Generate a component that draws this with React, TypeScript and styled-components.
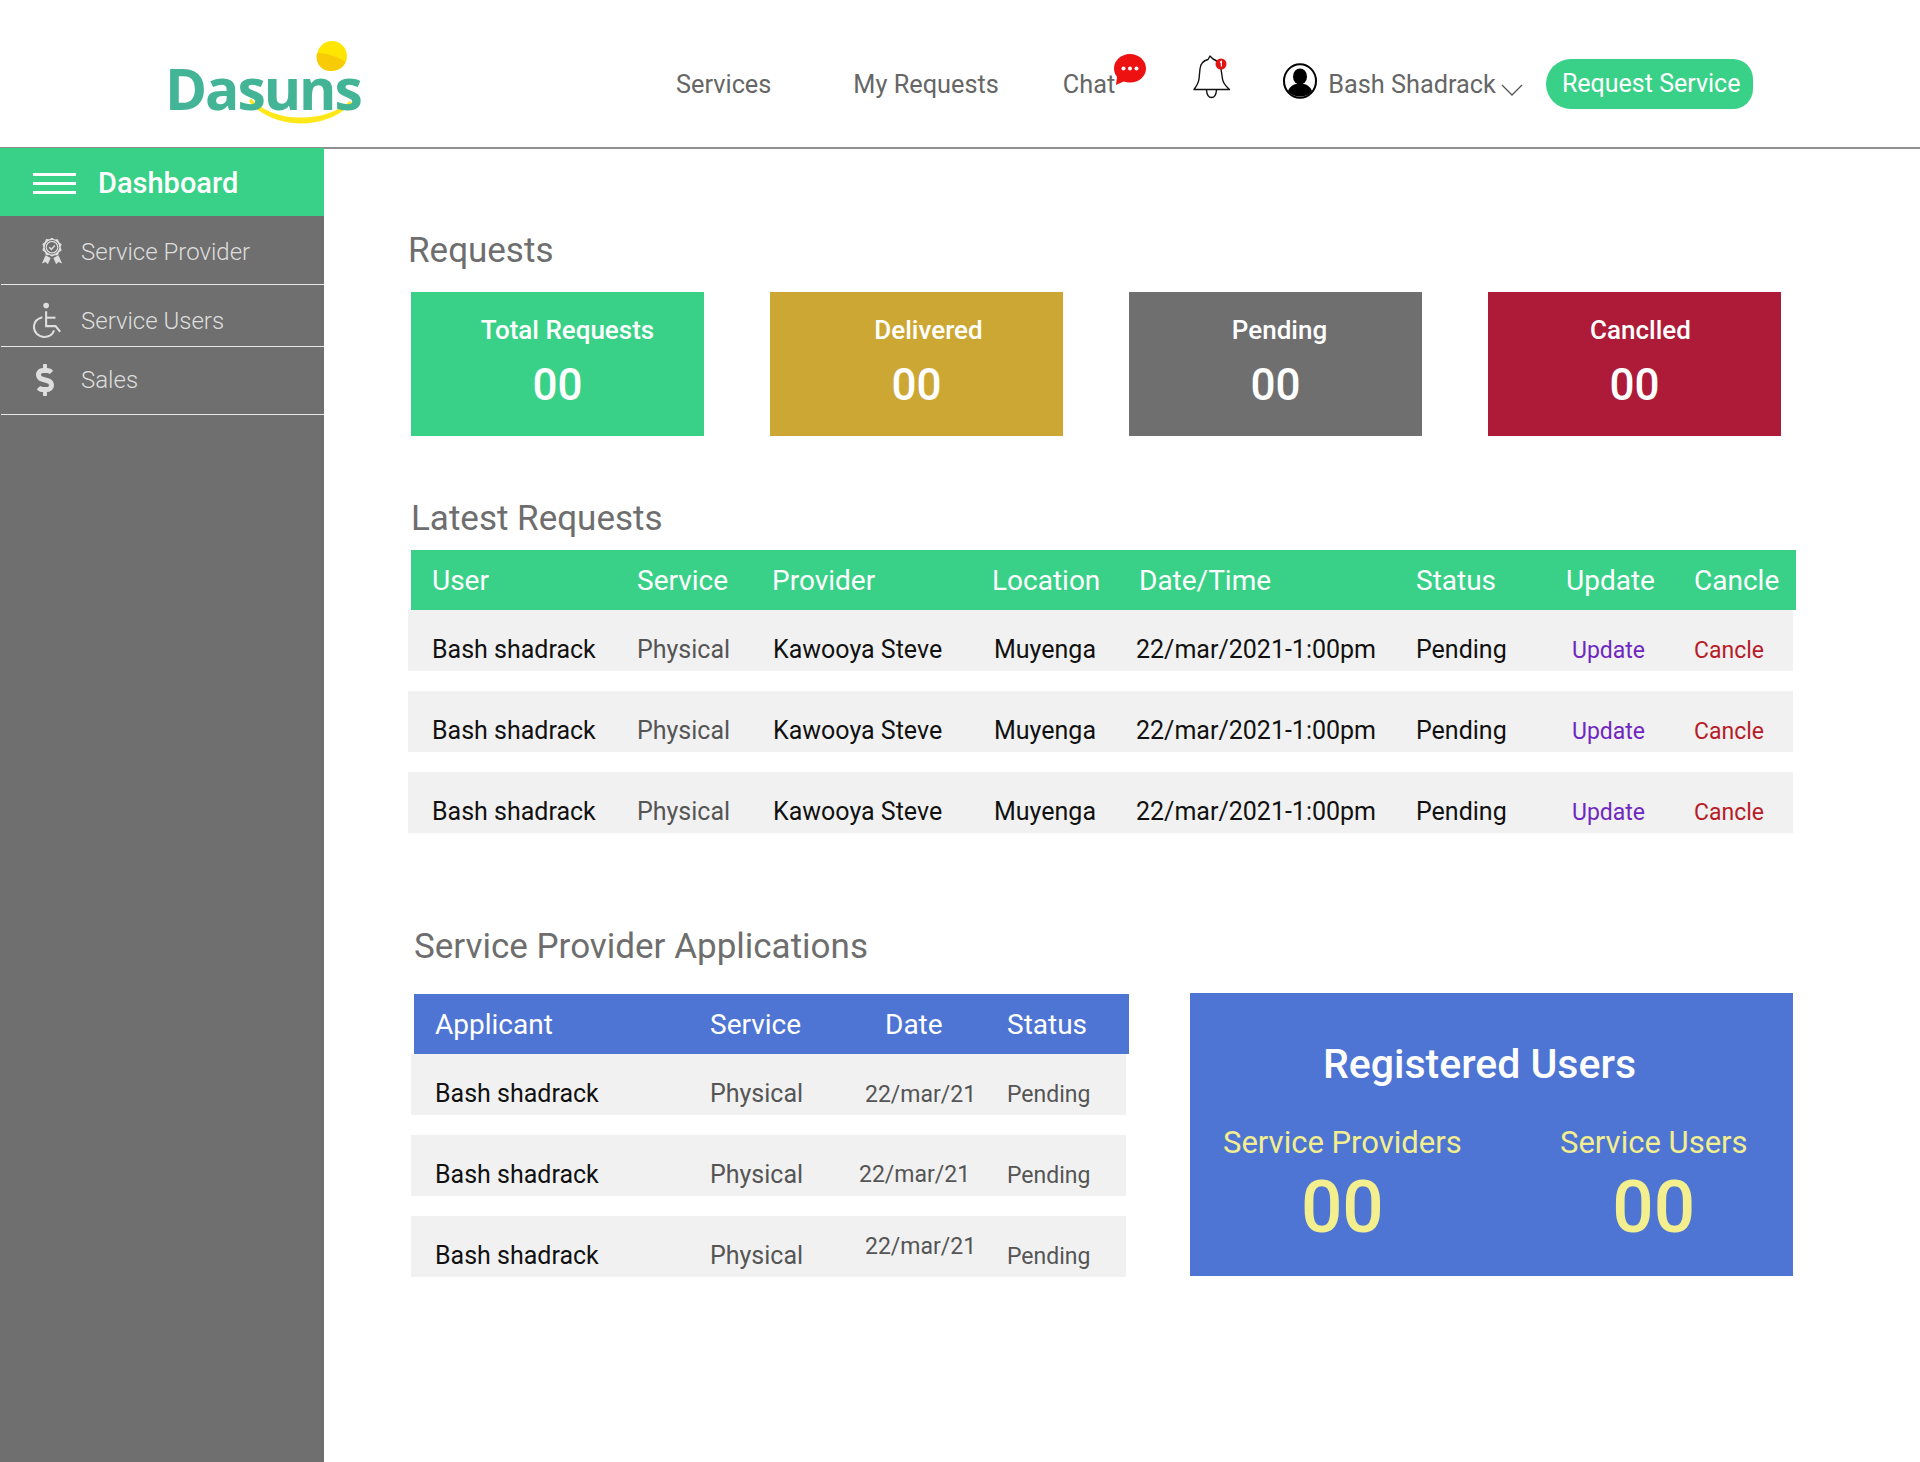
import React from 'react';
import styled, { createGlobalStyle } from 'styled-components';
import { FaDollarSign } from 'react-icons/fa';

const GREEN = '#38d187';
const BLUE = '#4e75d3';
const GREY = '#6f6f6f';

const Global = createGlobalStyle`
  html, body { margin: 0; padding: 0; background: #fff; }
  body { font-family: Roboto, "Liberation Sans", sans-serif; }
  * { box-sizing: border-box; }
`;

const Page = styled.div`
  width: 1920px;
  height: 1462px;
  overflow: hidden;
  display: flex;
  flex-direction: column;
`;

const TopBar = styled.header`
  height: 149px;
  flex: none;
  display: flex;
  align-items: flex-start;
  border-bottom: 2px solid #8f8f8f;
`;

const Logo = styled.div`
  position: relative;
  width: 230px;
  height: 100px;
  margin: 26px 0 0 165px;
  flex: none;
`;

const LogoArt = styled.svg`
  position: absolute;
  left: 0;
  top: 0;
`;

const LogoText = styled.span`
  position: absolute;
  left: 0;
  top: 28px;
  font-family: "Open Sans", Lato, sans-serif;
  font-weight: 700;
  font-size: 57px;
  line-height: 68px;
  letter-spacing: -2.1px;
  color: #43b496;
`;

const NavLink = styled.span<{ $left: number }>`
  margin: 70px 0 0 ${p => p.$left}px;
  font-size: 25.3px;
  line-height: 30px;
  font-weight: 400;
  color: #666;
  white-space: nowrap;
  flex: none;
`;

const IconSlot = styled.div<{ $left: number; $top: number }>`
  margin: ${p => p.$top}px 0 0 ${p => p.$left}px;
  flex: none;
  display: flex;
`;

const RequestButton = styled.button`
  margin: 59px 0 0 23px;
  width: 207px;
  height: 50px;
  padding: 0 0 0 16px;
  border: 0;
  border-radius: 25px 20px 20px 25px;
  background: ${GREEN};
  color: #fff;
  font: 400 25px/50px Roboto, sans-serif;
  text-align: left;
  white-space: nowrap;
`;

const Body = styled.div`
  flex: 1;
  display: flex;
  min-height: 0;
`;

const Sidebar = styled.aside`
  width: 324px;
  flex: none;
  margin-top: -1px;
  background: ${GREY};
`;

const DashboardBar = styled.div`
  height: 68px;
  background: ${GREEN};
  display: flex;
  align-items: center;
  padding: 2px 0 0 33px;
  gap: 22px;
  color: #fff;
  font-size: 29px;
  font-weight: 500;
`;

const Burger = styled.span`
  width: 43px;
  height: 21px;
  display: block;
  border-top: 3px solid #fff;
  border-bottom: 3px solid #fff;
  position: relative;
  &::after {
    content: '';
    position: absolute;
    left: 0;
    right: 0;
    top: 6px;
    height: 3px;
    background: #fff;
  }
`;

const SideItem = styled.div<{ $height: number; $top?: number; $bottom?: number }>`
  height: ${p => p.$height}px;
  margin-left: 1px;
  display: flex;
  align-items: center;
  padding-top: ${p => p.$top ?? 0}px;
  padding-bottom: ${p => p.$bottom ?? 0}px;
  border-bottom: 1px solid #e8e8e8;
  color: #dedede;
  font-size: 24px;
  font-weight: 300;
`;

const SideIcon = styled.span<{ $indent: number }>`
  width: 80px;
  flex: none;
  display: flex;
  padding-left: ${p => p.$indent}px;
  color: #dedede;
`;

const Main = styled.main`
  flex: 1;
  padding: 82px 0 0 84px;
`;

const SectionTitle = styled.h2<{ $left: number; $top: number; $bottom: number }>`
  margin: ${p => p.$top}px 0 ${p => p.$bottom}px ${p => p.$left}px;
  font-size: 35px;
  line-height: 40px;
  font-weight: 400;
  color: #6e6e6e;
`;

const Cards = styled.div`
  display: flex;
  gap: 66px;
  margin-left: 3px;
`;

const Card = styled.div<{ $bg: string }>`
  width: 293px;
  height: 144px;
  background: ${p => p.$bg};
  color: #fff;
  display: flex;
  flex-direction: column;
  align-items: center;
  padding-top: 22px;
`;

const CardLabel = styled.div<{ $shift: number }>`
  font-size: 26px;
  line-height: 32px;
  font-weight: 500;
  margin-left: ${p => p.$shift}px;
`;

const CardValue = styled.div`
  font-size: 44px;
  line-height: 52px;
  font-weight: 500;
  margin-top: 13px;
`;

const HeadRow = styled.div<{ $cols: string; $left: number; $pad: number; $bg: string; $width: number }>`
  display: grid;
  grid-template-columns: ${p => p.$cols};
  align-items: center;
  height: 60px;
  width: ${p => p.$width}px;
  margin-left: ${p => p.$left}px;
  padding-left: ${p => p.$pad}px;
  background: ${p => p.$bg};
  color: #fff;
  font-size: 28px;
  white-space: nowrap;
`;

const DataRow = styled.div<{ $cols: string; $left: number; $pad: number; $width: number }>`
  display: grid;
  grid-template-columns: ${p => p.$cols};
  align-items: center;
  height: 61px;
  width: ${p => p.$width}px;
  margin: 0 0 20px ${p => p.$left}px;
  padding: 17px 0 0 ${p => p.$pad}px;
  background: #f1f1f1;
  white-space: nowrap;
  &:last-child { margin-bottom: 0; }
`;

const Cell = styled.span<{ $color?: string; $size?: number; $x?: number; $y?: number }>`
  color: ${p => p.$color ?? '#111'};
  font-size: ${p => p.$size ?? 25}px;
  margin-left: ${p => p.$x ?? 0}px;
  margin-top: ${p => p.$y ?? 0}px;
`;

const BottomRow = styled.div`
  display: flex;
  align-items: flex-start;
  gap: 61px;
`;

const AppTable = styled.div`
  width: 721px;
  flex: none;
  margin-top: 1px;
`;

const UsersBox = styled.section`
  width: 603px;
  height: 283px;
  background: ${BLUE};
  display: flex;
  flex-direction: column;
`;

const UsersTitle = styled.div`
  margin: 47px 0 0 -24px;
  text-align: center;
  color: #fff;
  font-size: 41px;
  line-height: 48px;
  font-weight: 500;
`;

const UsersGrid = styled.div`
  display: grid;
  grid-template-columns: 306px 1fr;
  margin-top: 36px;
  color: #f3ee8e;
`;

const UsersCol = styled.div<{ $indent: number }>`
  display: flex;
  flex-direction: column;
  align-items: center;
  padding-left: ${p => p.$indent}px;
  width: fit-content;
  white-space: nowrap;
`;

const UsersLabel = styled.div`
  font-size: 31px;
  line-height: 38px;
`;

const UsersValue = styled.div`
  font-size: 73px;
  line-height: 86px;
  font-weight: 500;
  margin-top: 2px;
`;

const MainCols = '205px 135px 220px 147px 277px 150px 128px auto';
const MainRowCols = '205px 136px 221px 142px 280px 156px 122px auto';
const AppHeadCols = '275px 175px 122px auto';
const AppRowCols = '275px 149px 148px auto';

const PHYS = '#555';

const ChatBubble = () => (
  <svg width="34" height="34" viewBox="0 0 34 34">
    <path d="M17 1C8 1 1 7.500 1 15.500c0 3.200 1.100 6 3 8.300L3 32l7.600-3.400c2 .7 4.200 1 6.400 1 9 0 16-6.500 16-14.100C33 7.500 26 1 17 1Z" fill="#ee1111" />
    <circle cx="10.500" cy="15.500" r="2" fill="#fff" />
    <circle cx="17" cy="15.500" r="2" fill="#fff" />
    <circle cx="23.500" cy="15.500" r="2" fill="#fff" />
  </svg>
);

const Bell = () => (
  <svg width="40" height="46" viewBox="0 0 40 46" fill="none">
    <path d="M2 35.500c3-4 4.500-6 5-10.500l1-10c.5-6 4-8.500 8-9.500L18 2l3 3c4 1.500 7 5 8 10l1.500 10c.5 4 3 7 7 10.500Z" fill="#fff" stroke="#111" strokeWidth="1.400" strokeLinejoin="round" />
    <path d="M14.500 36c.3 4 2 7.500 5 7.500s4.700-3.500 5-7.500" stroke="#111" strokeWidth="1.400" />
    <circle cx="29" cy="10" r="5.500" fill="#e11414" />
    <path d="M28 8.500 29.400 7.500V12.500" stroke="#fff" strokeWidth="1.200" />
  </svg>
);

const Avatar = () => (
  <svg width="34" height="36" viewBox="0 0 34 36">
    <ellipse cx="17" cy="18" rx="16" ry="16.800" fill="#fff" stroke="#000" strokeWidth="2" />
    <ellipse cx="17" cy="13.500" rx="7" ry="8" fill="#000" />
    <path d="M5 28c2-5 6-6.500 8-7h8c2 .5 6 2 8 7-3 4-7 5.500-12 5.500S8 32 5 28Z" fill="#000" />
  </svg>
);

const Chevron = () => (
  <svg width="22" height="12" viewBox="0 0 22 12" fill="none">
    <path d="M1 1l10 10L21 1" stroke="#555" strokeWidth="1.300" />
  </svg>
);

const AwardIcon = () => (
  <svg width="22" height="29" viewBox="0 0 24 30">
    <path d="M5 19 1 28l4-1.500L7.500 29l3-7Zm14 0 4 9-4-1.500-2.500 2.500-3-7Z" fill="#dedede" />
    <path d="M12 0l3 1.800 3.500-.2 1.200 3.300 2.800 2.100-1 3.400 1 3.400-2.800 2.100-1.200 3.300-3.500-.2L12 20.500l-3-1.700-3.500.2-1.200-3.300-2.800-2.100 1-3.400-1-3.400 2.800-2.100 1.200-3.300 3.500.2Z" fill="#dedede" />
    <circle cx="12" cy="10.300" r="7.400" fill="none" stroke="#6f6f6f" strokeWidth="1" />
    <circle cx="12" cy="10.300" r="5.600" fill="#6f6f6f" />
    <path d="M9 10.300l2.300 2.400 3.800-4.300" stroke="#dedede" strokeWidth="1.600" fill="none" />
  </svg>
);

const ChairIcon = () => (
  <svg width="30" height="37" viewBox="0 0 32 38" fill="none" stroke="#dedede" strokeWidth="2.200">
    <circle cx="14" cy="3" r="3" fill="#dedede" stroke="none" />
    <path d="M14 9v16h10l5 6" />
    <path d="M14 16h10" />
    <path d="M10 15.500C4.500 17 1 21 1 26c0 6 5 10.500 11 10.500 5 0 9-2.800 10.500-7" />
  </svg>
);

const requests = [0, 1, 2];

export default function App() {
  return (
    <Page>
      <Global />
      <TopBar>
        <Logo>
          <LogoArt width="230" height="100" viewBox="0 0 230 100">
            <circle cx="167" cy="30" r="15" fill="#ffe600" />
            <path d="M152.500 27c10 0 21 4 28 9-2 5.500-8 9-15 9-8 0-14-6-14-14 0-1.500.3-3 1-4Z" fill="#f7cb06" />
            <path d="M85 74c22 24 75 26 101 2-26 28-78 26-101-2Z" fill="#ffe81a" stroke="#ffe81a" strokeWidth="3" />
          </LogoArt>
          <LogoText>Dasuns</LogoText>
        </Logo>
        <NavLink $left={281}>Services</NavLink>
        <NavLink $left={82}>My Requests</NavLink>
        <NavLink $left={64}>Chat</NavLink>
        <IconSlot $left={-2} $top={53}><ChatBubble /></IconSlot>
        <IconSlot $left={45} $top={54}><Bell /></IconSlot>
        <IconSlot $left={51} $top={63}><Avatar /></IconSlot>
        <NavLink $left={11}>Bash Shadrack</NavLink>
        <IconSlot $left={5} $top={84}><Chevron /></IconSlot>
        <RequestButton>Request Service</RequestButton>
      </TopBar>
      <Body>
        <Sidebar>
          <DashboardBar><Burger />Dashboard</DashboardBar>
          <SideItem $height={69} $top={3}><SideIcon $indent={40}><AwardIcon /></SideIcon>Service Provider</SideItem>
          <SideItem $height={62} $top={10}><SideIcon $indent={32}><ChairIcon /></SideIcon>Service Users</SideItem>
          <SideItem $height={68} $bottom={1}><SideIcon $indent={28}><FaDollarSign size={32} /></SideIcon>Sales</SideItem>
        </Sidebar>
        <Main>
          <SectionTitle $left={0} $top={0} $bottom={21}>Requests</SectionTitle>
          <Cards>
            <Card $bg="#38d187"><CardLabel $shift={20}>Total Requests</CardLabel><CardValue>00</CardValue></Card>
            <Card $bg="#cda733"><CardLabel $shift={24}>Delivered</CardLabel><CardValue>00</CardValue></Card>
            <Card $bg="#6f6f6f"><CardLabel $shift={8}>Pending</CardLabel><CardValue>00</CardValue></Card>
            <Card $bg="#ad1b38"><CardLabel $shift={12}>Canclled</CardLabel><CardValue>00</CardValue></Card>
          </Cards>
          <SectionTitle $left={3} $top={63} $bottom={11}>Latest Requests</SectionTitle>
          <HeadRow $cols={MainCols} $left={3} $pad={21} $bg={GREEN} $width={1385}>
            <span>User</span><span>Service</span><span>Provider</span><span>Location</span><span>Date/Time</span><span>Status</span><span>Update</span><span>Cancle</span>
          </HeadRow>
          <div>
            {requests.map(i => (
              <DataRow key={i} $cols={MainRowCols} $left={0} $pad={24} $width={1385}>
                <Cell>Bash shadrack</Cell>
                <Cell $color={PHYS}>Physical</Cell>
                <Cell>Kawooya Steve</Cell>
                <Cell>Muyenga</Cell>
                <Cell>22/mar/2021-1:00pm</Cell>
                <Cell>Pending</Cell>
                <Cell $color="#6f27c0" $size={23} $y={2}>Update</Cell>
                <Cell $color="#b71c28" $size={23} $y={2}>Cancle</Cell>
              </DataRow>
            ))}
          </div>
          <SectionTitle $left={6} $top={94} $bottom={26}>Service Provider Applications</SectionTitle>
          <BottomRow>
            <AppTable>
              <HeadRow $cols={AppHeadCols} $left={6} $pad={21} $bg={BLUE} $width={715}>
                <span>Applicant</span><span>Service</span><span>Date</span><span>Status</span>
              </HeadRow>
              <div>
                <DataRow $cols={AppRowCols} $left={3} $pad={24} $width={715}>
                  <Cell>Bash shadrack</Cell><Cell $color={PHYS}>Physical</Cell><Cell $color={PHYS} $size={23} $x={6} $y={2}>22/mar/21</Cell><Cell $color={PHYS} $size={23} $y={2}>Pending</Cell>
                </DataRow>
                <DataRow $cols={AppRowCols} $left={3} $pad={24} $width={715}>
                  <Cell>Bash shadrack</Cell><Cell $color={PHYS}>Physical</Cell><Cell $color={PHYS} $size={23}>22/mar/21</Cell><Cell $color={PHYS} $size={23} $y={2}>Pending</Cell>
                </DataRow>
                <DataRow $cols={AppRowCols} $left={3} $pad={24} $width={715}>
                  <Cell>Bash shadrack</Cell><Cell $color={PHYS}>Physical</Cell><Cell $color={PHYS} $size={23} $x={6} $y={-18}>22/mar/21</Cell><Cell $color={PHYS} $size={23} $y={2}>Pending</Cell>
                </DataRow>
              </div>
            </AppTable>
            <UsersBox>
              <UsersTitle>Registered Users</UsersTitle>
              <UsersGrid>
                <UsersCol $indent={33}><UsersLabel>Service Providers</UsersLabel><UsersValue>00</UsersValue></UsersCol>
                <UsersCol $indent={64}><UsersLabel>Service Users</UsersLabel><UsersValue>00</UsersValue></UsersCol>
              </UsersGrid>
            </UsersBox>
          </BottomRow>
        </Main>
      </Body>
    </Page>
  );
}
